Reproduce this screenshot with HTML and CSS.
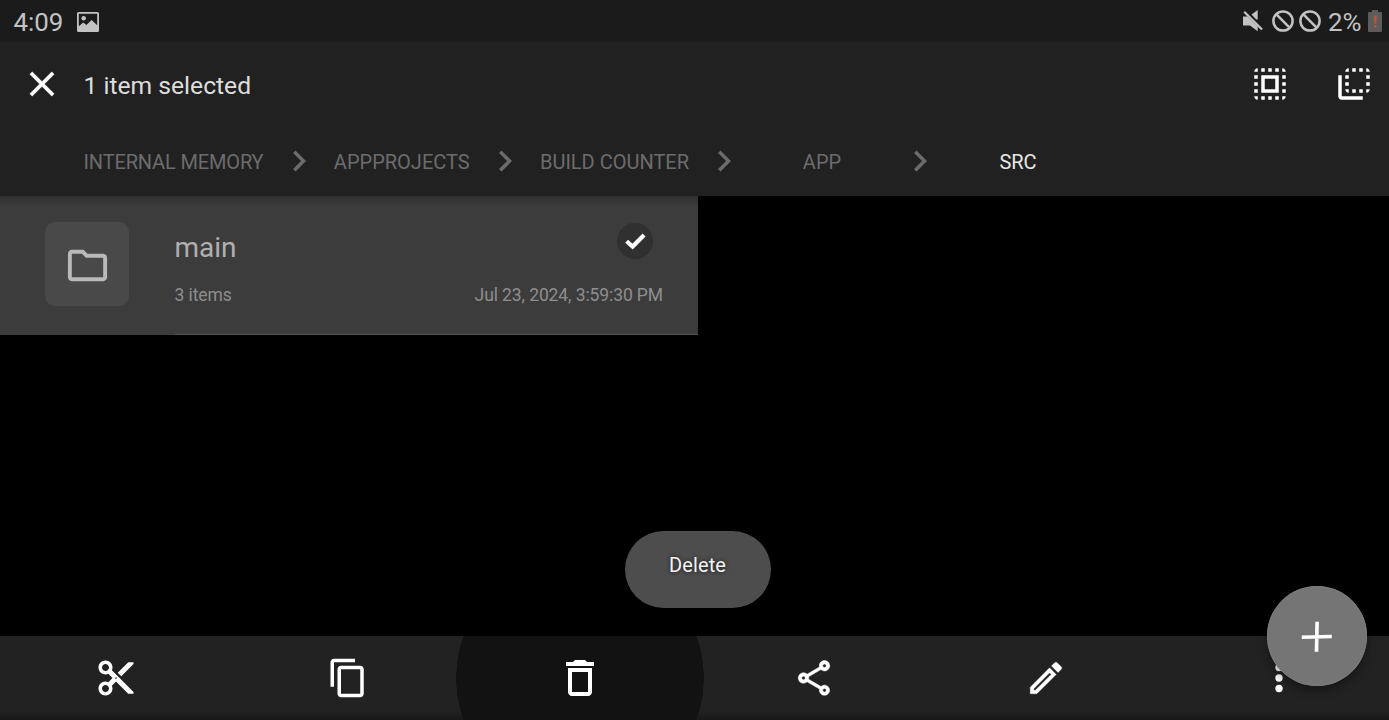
FILE: index.html
```html
<!DOCTYPE html>
<html lang="en">
<head>
<meta charset="utf-8">
<title>Files</title>
<link rel="stylesheet" href="styles.css">
</head>
<body>
<div class="screen">
  <div class="status">
    <span class="clock">4:09</span>
    <svg class="st-image" viewBox="0 0 22 20"><path fill-rule="evenodd" d="M1.500 0h19A1.500 1.500 0 0 1 22 1.500v17a1.500 1.500 0 0 1-1.500 1.500h-19A1.500 1.500 0 0 1 0 18.500v-17A1.500 1.500 0 0 1 1.500 0zM1.800 1.800v12.400l4.400-3.700 3.200 2.400 5.200-5 5.600 5.300V1.800z"/><circle cx="6.700" cy="6.300" r="2.200"/></svg>
    <div class="st-right">
      <svg class="st-mute" viewBox="0 0 20 22"><path d="M8.500 4.500L14.700 0v9.500l-1.500 0z"/><path d="M0 6.500h4.500L14.700 16.500v4.700L7 15.500H0z"/><path d="M2.600 .6L20 18" stroke="#1b1b1b" stroke-width="1.500"/><path d="M1.200 1.700L19 19.500" stroke="#c2c2c2" stroke-width="2.300"/></svg>
      <svg class="st-block" viewBox="0 0 22 22"><g fill="none" stroke="#c2c2c2" stroke-width="2.500"><circle cx="11" cy="11" r="9.600"/><path d="M4.200 4.200l13.600 13.600"/></g></svg>
      <svg class="st-block" viewBox="0 0 22 22"><g fill="none" stroke="#c2c2c2" stroke-width="2.500"><circle cx="11" cy="11" r="9.600"/><path d="M4.200 4.200l13.600 13.600"/></g></svg>
      <span class="percent">2%</span>
      <svg class="st-battery" viewBox="0 0 14 22"><path fill="#5c5c5c" d="M4 0h6v2h3a1 1 0 0 1 1 1v18a1 1 0 0 1-1 1H1a1 1 0 0 1-1-1V3a1 1 0 0 1 1-1h3z"/><path fill="#b0563c" d="M5.700 5.500h3.200l-.5 8H6.200zM6 15h2.600v2.500H6z"/></svg>
    </div>
  </div>

  <div class="header">
    <div class="toolbar">
      <svg class="icon" viewBox="0 0 24 24"><path d="M19 6.410L17.590 5 12 10.590 6.410 5 5 6.410 10.590 12 5 17.590 6.410 19 12 13.410 17.590 19 19 17.590 13.410 12z" stroke="#fff" stroke-width=".15"/></svg>
      <span class="title">1 item selected</span>
      <svg class="icon select-all" viewBox="0 0 24 24"><path d="M3 5h2V3c-1.100 0-2 .9-2 2zm0 8h2v-2H3v2zm4 8h2v-2H7v2zM3 9h2V7H3v2zm10-6h-2v2h2V3zm6 0v2h2c0-1.100-.9-2-2-2zM5 21v-2H3c0 1.100.9 2 2 2zm-2-4h2v-2H3v2zM9 3H7v2h2V3zm2 18h2v-2h-2v2zm8-8h2v-2h-2v2zm0 8c1.100 0 2-.9 2-2h-2v2zm0-12h2V7h-2v2zm0 8h2v-2h-2v2zm-4 4h2v-2h-2v2zm0-16h2V3h-2v2zM7 17h10V7H7v10zm2-8h6v6H9V9z"/></svg>
      <svg class="icon" viewBox="0 0 24 24"><path d="M9 7H7v2h2V7zm0 4H7v2h2v-2zm0-8c-1.110 0-2 .9-2 2h2V3zm4 12h-2v2h2v-2zm6-12v2h2c0-1.100-.9-2-2-2zm-6 0h-2v2h2V3zM9 17v-2H7c0 1.100.89 2 2 2zm10-4h2v-2h-2v2zm0-4h2V7h-2v2zm0 8c1.100 0 2-.9 2-2h-2v2zM5 7H3v12c0 1.100.89 2 2 2h12v-2H5V7zm10-2h2V3h-2v2zm0 12h2v-2h-2v2z"/></svg>
    </div>
    <div class="crumbs">
      <span class="crumb c-root">INTERNAL MEMORY</span>
      <svg class="chev" viewBox="0 0 24 24"><path d="M10 6L8.590 7.410 13.170 12l-4.580 4.590L10 18l6-6z"/></svg>
      <span class="crumb c-projects">APPPROJECTS</span>
      <svg class="chev" viewBox="0 0 24 24"><path d="M10 6L8.590 7.410 13.170 12l-4.580 4.590L10 18l6-6z"/></svg>
      <span class="crumb c-build">BUILD COUNTER</span>
      <svg class="chev" viewBox="0 0 24 24"><path d="M10 6L8.590 7.410 13.170 12l-4.580 4.590L10 18l6-6z"/></svg>
      <span class="crumb">APP</span>
      <svg class="chev" viewBox="0 0 24 24"><path d="M10 6L8.590 7.410 13.170 12l-4.580 4.590L10 18l6-6z"/></svg>
      <span class="crumb current">SRC</span>
    </div>
  </div>

  <div class="content">
    <div class="row">
      <div class="tile"><svg class="folder" viewBox="0 0 24 24"><path d="M9.170 6l2 2H20v10H4V6h5.170M10 4H4c-1.100 0-1.990.9-1.990 2L2 18c0 1.100.9 2 2 2h16c1.100 0 2-.9 2-2V8c0-1.100-.9-2-2-2h-8l-2-2z"/></svg></div>
      <div class="info">
        <div class="line">
          <span class="name">main</span>
          <span class="check"><svg viewBox="0 0 36 36"><path d="M9.600 18.200l6 5.300L27.100 11.900" fill="none" stroke="#fff" stroke-width="4.200"/></svg></span>
        </div>
        <div class="line meta"><span class="count">3 items</span><span class="date">Jul 23, 2024, 3:59:30 PM</span></div>
      </div>
    </div>
  </div>

  <div class="actions">
    <div class="action"><svg class="icon" viewBox="0 0 24 24"><path d="M9.640 7.640c.23-.5.36-1.050.36-1.640 0-2.210-1.790-4-4-4S2 3.790 2 6s1.790 4 4 4c.59 0 1.140-.13 1.640-.36L10 12l-2.360 2.360C7.140 14.130 6.590 14 6 14c-2.210 0-4 1.790-4 4s1.790 4 4 4 4-1.790 4-4c0-.59-.13-1.140-.36-1.640L12 14l7 7h3v-1L9.640 7.640zM6 8c-1.100 0-2-.89-2-2s.9-2 2-2 2 .89 2 2-.9 2-2 2zm0 12c-1.100 0-2-.89-2-2s.9-2 2-2 2 .89 2 2-.9 2-2 2zm6-7.500c-.28 0-.5-.22-.5-.5s.22-.5.5-.5.5.22.5.5-.22.5-.5.5zM19 3l-6 6 2 2 7-7V3z"/></svg></div>
    <div class="action"><svg class="icon" viewBox="0 0 24 24"><path d="M16 1H4c-1.100 0-2 .9-2 2v14h2V3h12V1zm3 4H8c-1.100 0-2 .9-2 2v14c0 1.100.9 2 2 2h11c1.100 0 2-.9 2-2V7c0-1.100-.9-2-2-2zm0 16H8V7h11v14z"/></svg></div>
    <div class="action pressed"><svg class="icon trash" viewBox="0 0 24 24"><path d="M16 9v10H8V9h8m-1.500-6h-5l-1 1H5v2h14V4h-3.500l-1-1zM18 7H6v12c0 1.100.9 2 2 2h8c1.100 0 2-.9 2-2V7z"/></svg></div>
    <div class="action"><svg class="icon" viewBox="0 0 24 24"><path d="M18 16.080c-.76 0-1.440.3-1.960.77L8.910 12.700c.05-.23.09-.46.09-.7s-.04-.47-.09-.7l7.050-4.110c.54.5 1.250.81 2.040.81 1.660 0 3-1.340 3-3s-1.340-3-3-3-3 1.340-3 3c0 .24.04.47.09.7L8.040 9.810C7.500 9.310 6.790 9 6 9c-1.660 0-3 1.340-3 3s1.340 3 3 3c.79 0 1.500-.31 2.040-.81l7.120 4.160c-.05.21-.08.43-.08.65 0 1.610 1.310 2.920 2.920 2.920s2.920-1.310 2.920-2.920-1.310-2.920-2.920-2.920zM18 4c.55 0 1 .45 1 1s-.45 1-1 1-1-.45-1-1 .45-1 1-1zM6 13c-.55 0-1-.45-1-1s.45-1 1-1 1 .45 1 1-.45 1-1 1zm12 7.020c-.55 0-1-.45-1-1s.45-1 1-1 1 .45 1 1-.45 1-1 1z" stroke="#fff" stroke-width=".25"/></svg></div>
    <div class="action"><svg class="icon" viewBox="0 0 24 24"><path d="M14.060 9.020l.92.92L5.920 19H5v-.92l9.060-9.060M17.660 3c-.25 0-.51.1-.7.29l-1.830 1.830 3.750 3.750 1.830-1.830c.39-.39.39-1.020 0-1.410l-2.340-2.340c-.2-.2-.45-.29-.71-.29zm-3.600 3.190L3 17.250V21h3.750L17.810 9.940l-3.750-3.750z" stroke="#fff" stroke-width=".2"/></svg></div>
    <div class="action"><svg class="icon" viewBox="0 0 24 24"><circle cx="12" cy="6" r="2.100"/><circle cx="12" cy="12" r="2.100"/><circle cx="12" cy="18" r="2.100"/></svg></div>
  </div>

  <div class="toast">Delete</div>
  <div class="fab"><svg viewBox="0 0 100 100"><path d="M34.800 51.200L64.800 50.500M50.100 35.700L49.500 65.700" stroke="#fff" stroke-width="3.600"/></svg></div>
</div>
</body>
</html>
```
FILE: styles.css
```css
* { box-sizing: border-box; }
body { margin: 0; background: #000; font-family: Roboto, sans-serif; }
svg { display: block; flex: none; }
span { white-space: nowrap; }

.screen {
  position: relative;
  display: flex;
  flex-direction: column;
  width: 1389px;
  height: 720px;
  overflow: hidden;
  background: #000;
}

.status {
  display: flex;
  align-items: center;
  height: 42px;
  padding: 1px 7px 0 13.500px;
  background: #1b1b1b;
  color: #c2c2c2;
  fill: #c2c2c2;
  font-size: 25.900px;
  line-height: 42px;
}
.clock { width: 63.500px; }
.st-image { width: 22px; height: 20px; }
.st-right { display: flex; align-items: center; margin-left: auto; }
.st-mute { width: 20px; height: 22px; margin: 0 9px 2px 0; }
.st-block { width: 22px; height: 22px; margin: 0 5px 2px 0; }
.percent { width: 35px; margin-left: 2px; }
.st-battery { width: 14px; height: 22px; margin: 0 0 1px 5px; }

.header { height: 154px; background: #212121; }
.icon { width: 42px; height: 42px; fill: #fff; }
.toolbar { display: flex; align-items: center; height: 84px; padding: 0 14.500px 0 20.500px; }
.title { flex: 1; padding: 3px 0 0 21px; color: #dedede; font-size: 24.650px; }
.select-all { margin-right: 42px; }
.crumbs { display: flex; align-items: center; height: 70px; padding-left: 69.500px; }
.crumb {
  width: 154px;
  padding-top: 2px;
  text-align: center;
  color: #6c6c6c;
  font-size: 20px;
}
.c-root { width: 208px; letter-spacing: -.15px; }
.c-projects { width: 164.500px; }
.c-build { width: 177px; }
.current { color: #e8e8e8; }
.chev { width: 42px; height: 42px; fill: #6c6c6c; }

.content { flex: 1; }
.row {
  display: flex;
  width: 697.500px;
  height: 139px;
  padding: 26px 0 0 44.500px;
  background: linear-gradient(#303030, #3c3c3c 10px);
}
.tile {
  display: flex;
  align-items: center;
  justify-content: center;
  width: 84px;
  height: 84px;
  border-radius: 10px;
  background: #494949;
}
.folder { width: 47px; height: 47px; margin: 2px 0 0 2px; fill: #b9b9b9; }
.info { flex: 1; height: 113px; margin-left: 46px; padding-right: 34.500px; border-bottom: 1px solid #505050; }
.line { display: flex; justify-content: space-between; height: 50px; }
.name { color: #b0b0b0; font-size: 28px; line-height: 51px; }
.check { width: 36px; height: 36px; margin: 1px 10.500px 0 0; border-radius: 50%; background: #303030; }
.meta { color: #8e8e8e; font-size: 17.500px; line-height: 46px; letter-spacing: -.1px; }

.actions {
  display: grid;
  grid-template-columns: repeat(6, 232.700px);
  height: 84px;
  margin-left: -.8px;
  overflow: hidden;
  background: linear-gradient(#222 74px, #191919);
}
.action { display: flex; align-items: center; justify-content: center; height: 84px; }
.pressed { background: radial-gradient(circle 124px at center, #121212 123.500px, transparent 124px); margin: 0 -9px 0 -11px; }
.trash { width: 48px; height: 48px; }

.toast {
  position: absolute;
  left: 624.500px;
  top: 531px;
  width: 146px;
  height: 77px;
  border-radius: 38.500px;
  background: #4d4d4d;
  color: #f4f4f4;
  font-size: 20px;
  letter-spacing: .15px;
  line-height: 68px;
  text-align: center;
  text-shadow: 0 0 4px rgba(0, 0, 0, .75);
}
.fab {
  position: absolute;
  left: 1267px;
  top: 586px;
  width: 100px;
  height: 100px;
  border-radius: 50%;
  background: #757575;
  box-shadow: 0 5px 10px rgba(0, 0, 0, .35), inset 0 0 1px 1px #7c7c7c;
}
```
